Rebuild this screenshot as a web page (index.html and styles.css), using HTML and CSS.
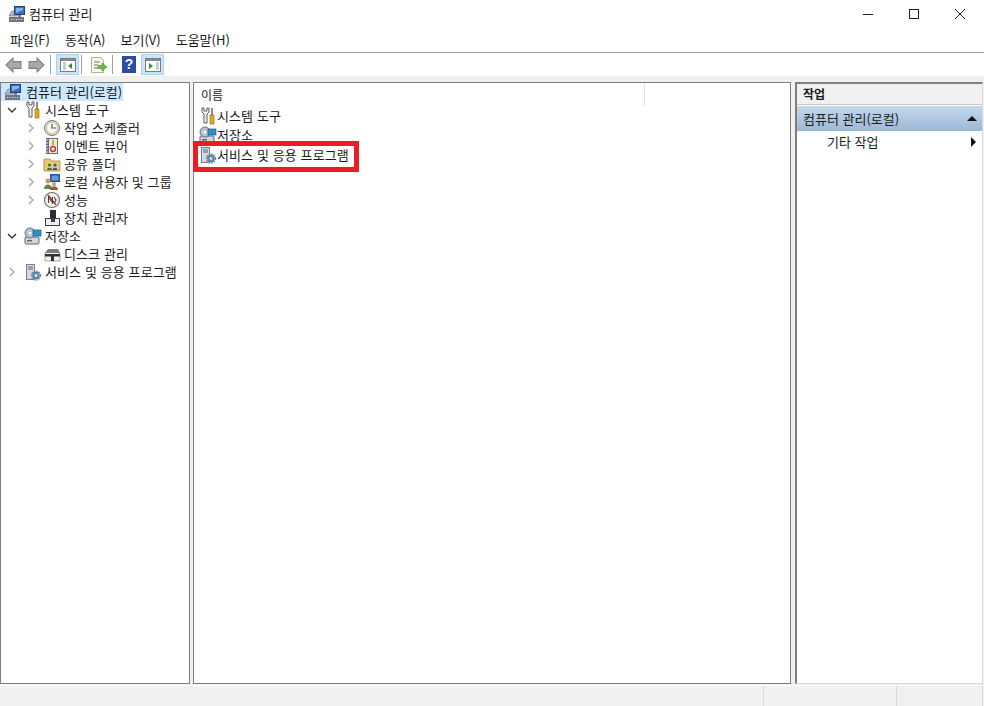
FILE: index.html
```html
<!DOCTYPE html>
<html lang="ko">
<head>
    <meta charset="utf-8" />
    <title>컴퓨터 관리</title>
    <link rel="stylesheet" href="styles.css">
</head>
<body>
<svg class="defs" width="0" height="0">
    <symbol id="i-computer" viewBox="0 0 18 18">
        <path d="M1 11l3-5h5v5z" fill="#b4bac4" stroke="#6d7480" stroke-width=".7"/>
        <rect x="6.500" y="1.500" width="10" height="8" fill="#3f6fc0" stroke="#2b3f6c"/>
        <path d="M8 3h7v2l-7 3z" fill="#7fb4ec"/>
        <rect x="10" y="10" width="3" height="2" fill="#7b818c"/>
        <rect x="1" y="12" width="15" height="5" fill="#6f7682"/>
        <path d="M3 14.500h1M5.500 14.500h1M8 14.500h1M10.500 14.500h1M13 14.500h1" stroke="#e2e5ea"/>
    </symbol>
    <symbol id="i-tools" viewBox="0 0 18 18">
        <path d="M3 1v4l2 2v9h3V7l2-2V1L8 1v3H5V1z" fill="#f4f4f4" stroke="#5b5b5b"/>
        <rect x="12" y="1" width="2" height="7" fill="#8c8c8c"/>
        <rect x="11" y="8" width="4" height="9" fill="#e3a81b" stroke="#8a6408" stroke-width=".6"/>
    </symbol>
    <symbol id="i-clock" viewBox="0 0 18 18">
        <circle cx="9" cy="9" r="7.500" fill="#e8dcc0" stroke="#777"/>
        <circle cx="9" cy="9" r="5.500" fill="#fbf8f0" stroke="#aaa" stroke-width=".6"/>
        <path d="M9 5v4h4" fill="none" stroke="#555" stroke-width="1.200"/>
    </symbol>
    <symbol id="i-event" viewBox="0 0 18 18">
        <rect x="3" y="1" width="12" height="16" fill="#5a6f8f"/>
        <rect x="6" y="2" width="8" height="14" fill="#f2ead8"/>
        <path d="M3 3h2M3 6h2M3 9h2M3 12h2M3 15h2" stroke="#dde"/>
        <rect x="9" y="3" width="2" height="5" fill="#d8a520"/>
        <circle cx="10" cy="12" r="2.500" fill="none" stroke="#c03a3a" stroke-width="1.400"/>
    </symbol>
    <symbol id="i-share" viewBox="0 0 18 18">
        <path d="M1 4h6l2 2h8v10H1z" fill="#e8c978" stroke="#a8883c" stroke-width=".8"/>
        <circle cx="6.500" cy="10" r="1.600" fill="#3f6e2c"/>
        <path d="M4 15c0-3 5-3 5 0z" fill="#3f6e2c"/>
        <circle cx="12" cy="10" r="1.600" fill="#2c5a9c"/>
        <path d="M9.500 15c0-3 5-3 5 0z" fill="#2c5a9c"/>
    </symbol>
    <symbol id="i-users" viewBox="0 0 18 18">
        <rect x="7" y="1" width="10" height="8" fill="#2d4f8e"/>
        <rect x="8.500" y="2.500" width="7" height="5" fill="#5f9be0"/>
        <circle cx="5" cy="8" r="2.500" fill="#c9976b"/>
        <path d="M1 16c0-6 8-6 8 0z" fill="#5b8a3c"/>
        <circle cx="11" cy="11" r="2.200" fill="#d6a77c"/>
        <path d="M7 17c0-5 8-5 8 0z" fill="#a05a3c"/>
    </symbol>
    <symbol id="i-perf" viewBox="0 0 18 18">
        <circle cx="9" cy="9" r="7.500" fill="#f4f1ea" stroke="#6e6e6e" stroke-width="1.200"/>
        <path d="M5 4l8 10" stroke="#c8342c" stroke-width="1.400"/>
        <path d="M5.500 12V6l4 6V6M11 6l2 3-1.500 3" fill="none" stroke="#444" stroke-width="1.100"/>
    </symbol>
    <symbol id="i-device" viewBox="0 0 18 18">
        <rect x="7" y="1" width="6" height="8" fill="#2a2f36"/>
        <rect x="2.500" y="9.500" width="14" height="7" fill="#eceef1" stroke="#3a3f48"/>
        <rect x="8" y="9" width="4" height="4" fill="#3a3f48"/>
    </symbol>
    <symbol id="i-storage" viewBox="0 0 18 18">
        <rect x="1" y="10" width="14" height="7" rx="1" fill="#cfd6dc" stroke="#5c6770"/>
        <rect x="3" y="13" width="5" height="1.500" fill="#5c6770"/>
        <circle cx="6" cy="6" r="5" fill="#b8c2cc" stroke="#6a7682"/>
        <circle cx="6" cy="6" r="1.500" fill="#fff"/>
        <rect x="9" y="3" width="8" height="6" fill="#2f8fc9" stroke="#1d5f8a" stroke-width=".7"/>
    </symbol>
    <symbol id="i-disk" viewBox="0 0 18 18">
        <path d="M2 9l3-4h10l2 4v7H2z" fill="#f4f4f4" stroke="#7a7f86" stroke-width=".7"/>
        <path d="M5 4h10l2 4H2z" fill="#777c83"/>
        <rect x="2" y="9" width="15" height="2.500" fill="#2e3237"/>
        <rect x="8" y="11" width="3" height="5" fill="#2e3237"/>
    </symbol>
    <symbol id="i-services" viewBox="0 0 18 18">
        <rect x="2.500" y="1.500" width="8" height="15" fill="#d5dbe2" stroke="#76808b"/>
        <path d="M4 4h5M4 6h5" stroke="#5a6570"/>
        <circle cx="12" cy="12.500" r="4.500" fill="none" stroke="#5b87a8" stroke-width="1.400" stroke-dasharray="1.600 1"/>
        <circle cx="12" cy="12.500" r="3.400" fill="#6a93b2" stroke="#37566e" stroke-width=".6"/>
        <circle cx="12" cy="12.500" r="1.300" fill="#e8eef3"/>
    </symbol>
    <symbol id="i-chev-right" viewBox="0 0 10 10">
        <path d="M3 1l4 4-4 4" fill="none" stroke="#a6a6a6" stroke-width="1.400"/>
    </symbol>
    <symbol id="i-chev-down" viewBox="0 0 10 10">
        <path d="M1 3l4 4 4-4" fill="none" stroke="#404040" stroke-width="1.500"/>
    </symbol>
</svg>

<!-- Title bar -->
<header class="titlebar">
    <svg class="ico title-ico"><use href="#i-computer"/></svg>
    <span class="title-text">컴퓨터 관리</span>
    <div class="win-buttons">
        <svg width="46" height="28" viewBox="0 0 46 28"><path d="M18 14.500h10" stroke="#222"/></svg>
        <svg width="46" height="28" viewBox="0 0 46 28"><rect x="18.500" y="9.500" width="9" height="9" fill="none" stroke="#222"/></svg>
        <svg width="46" height="28" viewBox="0 0 46 28"><path d="M18 9l10 10M28 9L18 19" stroke="#222" fill="none"/></svg>
    </div>
</header>

<!-- Menu -->
<nav class="menubar">
    <span>파일(F)</span>
    <span>동작(A)</span>
    <span>보기(V)</span>
    <span>도움말(H)</span>
</nav>

<!-- Toolbar -->
<div class="toolbar">
    <svg class="tb-arrow" viewBox="0 0 17 14" preserveAspectRatio="none"><path d="M1 7l7-6v3h8v6H8v3z" fill="#a9a9a9" stroke="#7f7f7f"/></svg>
    <svg class="tb-arrow second" viewBox="0 0 17 14" preserveAspectRatio="none"><path d="M16 7L9 1v3H1v6h8v3z" fill="#a9a9a9" stroke="#7f7f7f"/></svg>
    <i class="tb-sep"></i>
    <button class="tb-btn active">
        <svg width="16" height="16" viewBox="0 0 16 16"><rect x=".5" y="1.500" width="15" height="13" fill="#fff" stroke="#7d7d7d"/><rect x="1" y="2" width="14" height="2" fill="#8a8a8a"/><path d="M3 6h3M3 8h3M3 10h3M3 12h3" stroke="#999"/><path d="M12 6v6l-4-3z" fill="#2f8f3f"/></svg>
    </button>
    <i class="tb-sep"></i>
    <svg class="tb-export" viewBox="0 0 17 18"><path d="M1.500 1.500h9l3 3v12h-12z" fill="#faf8ee" stroke="#b5ad8c"/><path d="M4 6h6M4 9h4M4 12h4" stroke="#77715a"/><path d="M8 9.500h4V7l5 4-5 4v-2.500H8z" fill="#6cbb3c" stroke="#4a8c28" stroke-width=".6"/></svg>
    <i class="tb-sep"></i>
    <span class="tb-help">?</span>
    <button class="tb-btn active second">
        <svg width="16" height="16" viewBox="0 0 16 16"><rect x=".5" y="1.500" width="15" height="13" fill="#fff" stroke="#7d7d7d"/><rect x="1" y="2" width="14" height="2" fill="#8a8a8a"/><path d="M11 6h3M11 8h3M11 10h3M11 12h3" stroke="#999"/><path d="M4 6v6l4-3z" fill="#2f8f3f"/></svg>
    </button>
</div>

<main class="panes">
    <!-- Tree -->
    <section class="pane tree">
        <div class="node root selected"><svg class="ico"><use href="#i-computer"/></svg><span>컴퓨터 관리(로컬)</span></div>
        <div class="node lvl1"><svg class="chev"><use href="#i-chev-down"/></svg><svg class="ico"><use href="#i-tools"/></svg><span>시스템 도구</span></div>
        <div class="node lvl2"><svg class="chev"><use href="#i-chev-right"/></svg><svg class="ico"><use href="#i-clock"/></svg><span>작업 스케줄러</span></div>
        <div class="node lvl2"><svg class="chev"><use href="#i-chev-right"/></svg><svg class="ico"><use href="#i-event"/></svg><span>이벤트 뷰어</span></div>
        <div class="node lvl2"><svg class="chev"><use href="#i-chev-right"/></svg><svg class="ico"><use href="#i-share"/></svg><span>공유 폴더</span></div>
        <div class="node lvl2"><svg class="chev"><use href="#i-chev-right"/></svg><svg class="ico"><use href="#i-users"/></svg><span>로컬 사용자 및 그룹</span></div>
        <div class="node lvl2"><svg class="chev"><use href="#i-chev-right"/></svg><svg class="ico"><use href="#i-perf"/></svg><span>성능</span></div>
        <div class="node lvl2"><i class="chev"></i><svg class="ico"><use href="#i-device"/></svg><span>장치 관리자</span></div>
        <div class="node lvl1"><svg class="chev"><use href="#i-chev-down"/></svg><svg class="ico"><use href="#i-storage"/></svg><span>저장소</span></div>
        <div class="node lvl2"><i class="chev"></i><svg class="ico"><use href="#i-disk"/></svg><span>디스크 관리</span></div>
        <div class="node lvl1"><svg class="chev"><use href="#i-chev-right"/></svg><svg class="ico"><use href="#i-services"/></svg><span>서비스 및 응용 프로그램</span></div>
    </section>

    <!-- List -->
    <section class="pane list">
        <div class="list-head"><span class="col-name">이름</span></div>
        <div class="list-row"><svg class="ico"><use href="#i-tools"/></svg><span>시스템 도구</span></div>
        <div class="list-row"><svg class="ico"><use href="#i-storage"/></svg><span>저장소</span></div>
        <div class="list-row"><svg class="ico"><use href="#i-services"/></svg><span>서비스 및 응용 프로그램</span></div>
        <div class="callout"></div>
    </section>

    <!-- Actions -->
    <aside class="pane actions">
        <div class="act-head">작업</div>
        <div class="act-band"><span>컴퓨터 관리(로컬)</span><i class="tri-up"></i></div>
        <div class="act-item"><span>기타 작업</span><i class="tri-right"></i></div>
    </aside>
</main>

<footer class="statusbar">
    <div class="st-main"></div>
    <div class="st-mid"></div>
    <div class="st-end"></div>
</footer>
</body>
</html>
```

FILE: styles.css
```css
* {
    box-sizing: border-box;
}
html, body {
    height: 100%;
}
body {
    margin: 0;
    display: flex;
    flex-direction: column;
    overflow: hidden;
    background-color: #f0f0f0;
    color: #1a1a1a;
    font: 13px/18px "Noto Sans CJK KR", "Noto Sans", sans-serif;
}
.defs {
    position: absolute;
}
.ico {
    width: 18px;
    height: 18px;
    flex: none;
}

/* title bar */
.titlebar {
    height: 28px;
    display: flex;
    align-items: center;
    padding-left: 8px;
    background-color: #fff;
}
.title-text {
    margin-left: 3px;
    font-size: 13px;
}
.win-buttons {
    margin-left: auto;
    margin-right: 1px;
    display: flex;
}
.win-buttons svg {
    display: block;
}

/* menu */
.menubar {
    height: 25px;
    display: flex;
    align-items: center;
    gap: 15px;
    padding-left: 10px;
    background-color: #fff;
    border-bottom: 1px solid #a0a0a0;
    font-size: 13px;
}

/* toolbar */
.toolbar {
    height: 23px;
    display: flex;
    align-items: center;
    padding-left: 5px;
    background-color: #fff;
}
.tb-arrow {
    width: 17px;
    height: 16px;
}
.tb-arrow.second {
    margin-left: 6px;
}
.tb-sep {
    width: 1px;
    height: 19px;
    background-color: #a0a0a0;
    margin: 0 5px;
}
.tb-btn {
    width: 23px;
    height: 21px;
    padding: 0;
    display: flex;
    align-items: center;
    justify-content: center;
    background-color: #cce4f7;
    border: 1px solid #a9d4f2;
}
.tb-btn + .tb-sep {
    margin: 0 8px 0 2px;
}
.tb-btn.second {
    margin-left: 5px;
}
.tb-export {
    width: 17px;
    height: 18px;
}
.tb-help {
    width: 14px;
    height: 17px;
    margin-left: 4px;
    background-color: #2c4da3;
    color: #fff;
    font: bold 14px/17px "Liberation Sans", sans-serif;
    text-align: center;
}

/* panes */
.panes {
    flex: 1;
    min-height: 0;
    display: flex;
    padding: 6px 1px 1px 0;
    gap: 3px;
}
.pane {
    background-color: #fff;
    border: 1px solid #7f7f7f;
    position: relative;
}
.tree {
    width: 190px;
}
.list {
    width: 598px;
}
.actions {
    flex: 1;
    margin-left: 1px;
    border-color: #d9d9d9;
    border-left: 2px solid #7f7f7f;
    border-top: 2px solid #7f7f7f;
}

/* tree */
.node {
    height: 18px;
    display: flex;
    align-items: center;
    white-space: nowrap;
    letter-spacing: .1px;
}
.node span {
    margin-left: 3px;
}
.node.root {
    width: 122px;
    padding-left: 3px;
    letter-spacing: 0;
}
.node.root span {
    margin-left: 4px;
}
.node.selected {
    background-color: #cce8ff;
}
.lvl1 {
    padding-left: 6px;
}
.lvl2 {
    padding-left: 25px;
}
.chev {
    width: 10px;
    height: 10px;
    margin-right: 7px;
    flex: none;
}

/* list */
.list-head {
    height: 23px;
    display: flex;
    align-items: center;
    padding-left: 7px;
    font-size: 12px;
}
.col-name {
    display: block;
    width: 444px;
    height: 23px;
    line-height: 24px;
    border-right: 1px solid #e5e5e5;
}
.list-row {
    height: 19.5px;
    display: flex;
    align-items: center;
    padding-left: 5px;
    white-space: nowrap;
    letter-spacing: .1px;
}
.callout {
    position: absolute;
    left: -1px;
    top: 58px;
    width: 166px;
    height: 31px;
    border: 5px solid #ed1c24;
}

/* actions */
.act-head {
    height: 21px;
    padding: 1px 0 0 6px;
    background-color: #f0f0f0;
    border-bottom: 1px solid #c8c8c8;
    font-weight: bold;
    font-size: 12px;
}
.act-band {
    height: 25px;
    margin-top: 1px;
    display: flex;
    align-items: center;
    justify-content: space-between;
    padding: 0 5px 0 6px;
    background: linear-gradient(#c4d8ec, #9cb8d6);
}
.act-item {
    height: 22px;
    display: flex;
    align-items: center;
    justify-content: space-between;
    padding: 0 6px 0 30px;
}
.tri-up {
    width: 0;
    height: 0;
    border-left: 5px solid transparent;
    border-right: 5px solid transparent;
    border-bottom: 5px solid #111;
}
.tri-right {
    width: 0;
    height: 0;
    border-top: 5px solid transparent;
    border-bottom: 5px solid transparent;
    border-left: 5px solid #111;
}

/* status bar */
.statusbar {
    height: 21px;
    display: flex;
    padding-right: 1px;
    border-top: 1px solid #fff;
}
.statusbar div {
    border-right: 1px solid #d9d9d9;
}
.st-main {
    width: 764px;
}
.st-mid {
    width: 133px;
}
.st-end {
    flex: 1;
}
```
